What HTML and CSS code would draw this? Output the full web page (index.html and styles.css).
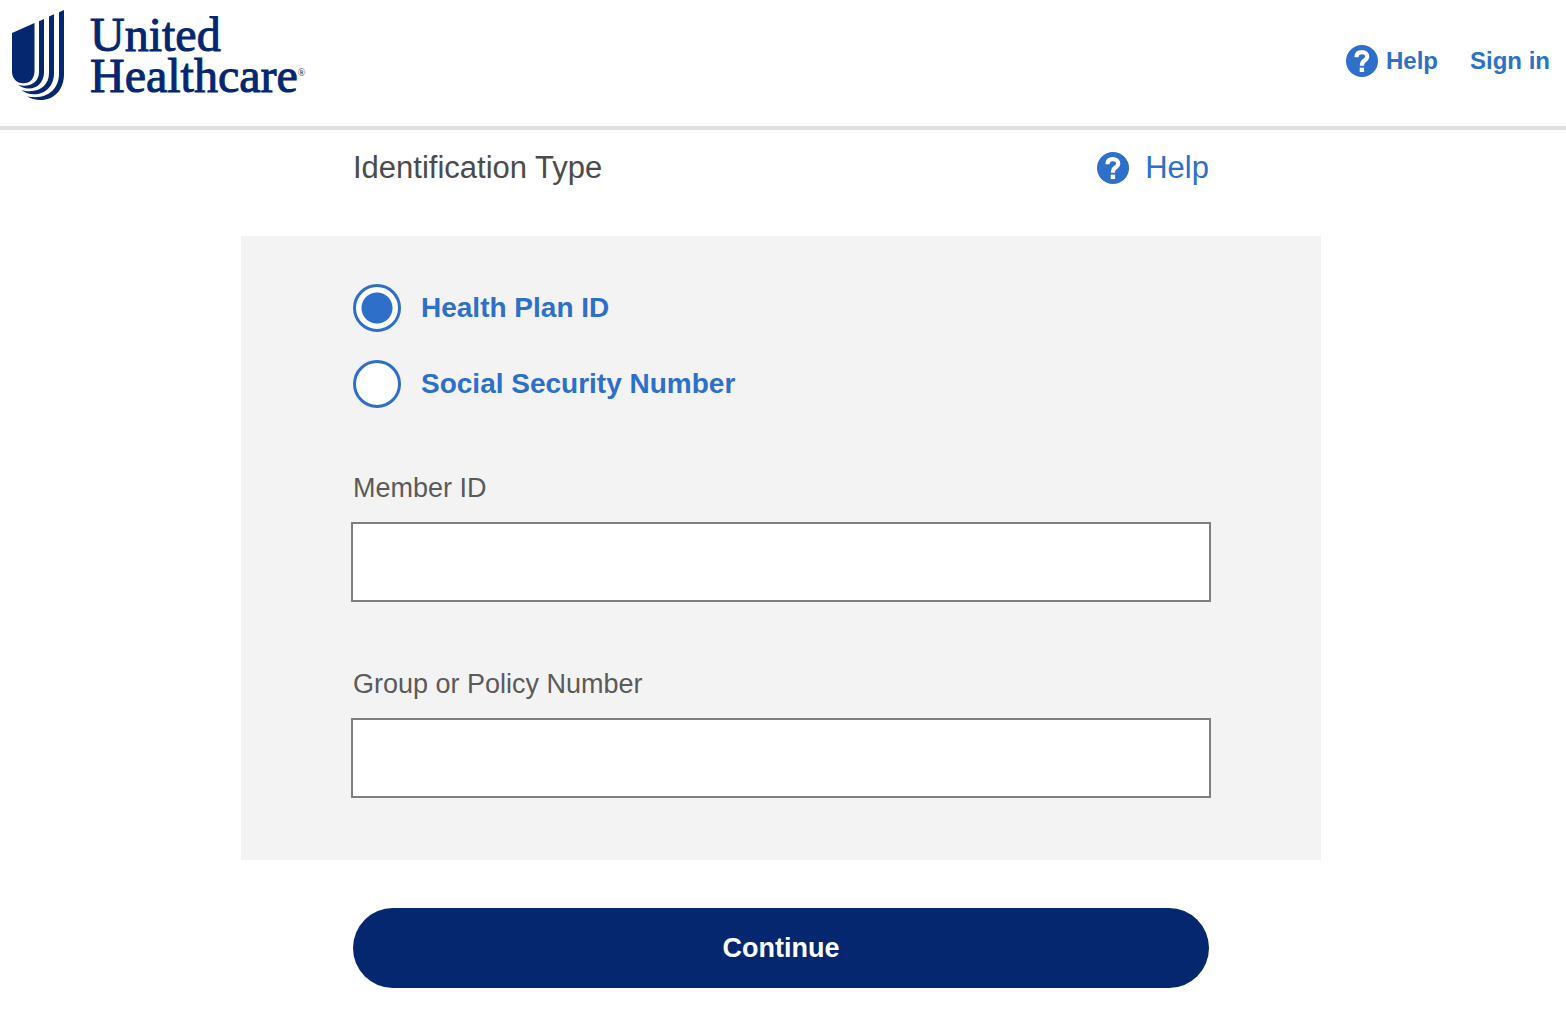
FILE: index.html
```html
<!DOCTYPE html>
<html lang="en">
<head>
<meta charset="utf-8">
<meta name="viewport" content="width=device-width, initial-scale=1">
<title>Identification Type</title>
<link rel="stylesheet" href="styles.css">
</head>
<body>
<svg class="sprite" aria-hidden="true">
  <symbol id="help-icon" viewBox="0 0 32 32">
    <circle cx="16" cy="16" r="16" fill="#2e6fc9"/>
    <path d="M10.400 12.300C10.500 9 12.700 7.200 15.900 7.200c3.100 0 5.300 1.700 5.300 4.300 0 2.100-1.200 3-2.800 4.100-1.700 1.200-2.500 2.300-2.500 5.100" fill="none" stroke="#fff" stroke-width="4.200"/>
    <path d="M13.700 22.600h4.400v4.400h-4.400z" fill="#fff"/>
  </symbol>
</svg>
<header class="header">
  <a class="logo" href="#">
    <svg class="logo-mark" viewBox="0 0 54 92" aria-hidden="true">
      <g fill="#04276f">
        <path d="M0 23 22.500 13V61C22.500 68.500 18 73.300 11.500 73.300 4.500 73.300 0 68.500 0 61.500Z"/>
        <path d="M27 11.200 32 9V62C32 72 25.500 78.500 17 78.500 12.500 78.500 9 77.200 6 74.800 8 75.500 10 75.800 12 75.800 21 75.800 27 70 27 62Z"/>
        <path d="M37 6.500 42 4.300V63C42 76 33.500 84.300 22 84.300 17 84.300 13 82.800 9.200 80 12 80.900 14.500 81.200 17.500 81.200 29.500 81.200 37 74 37 63Z"/>
        <path d="M47 2.300 52 0V64C52 80 42 90 28.500 90 23.500 90 19 88.800 15 86.300 18 87 20.500 87.200 23 87.200 37.500 87.200 47 77.500 47 64Z"/>
      </g>
    </svg>
    <span class="logo-text">United<br>Healthcare<span class="logo-reg">®</span></span>
  </a>
  <nav class="nav">
    <a class="nav-link" href="#"><svg class="icon" aria-hidden="true"><use href="#help-icon"/></svg>Help</a>
    <a class="nav-link" href="#">Sign in</a>
  </nav>
</header>
<main class="main">
  <form class="form">
    <div class="title-row">
      <h1 class="title">Identification Type</h1>
      <a class="help" href="#"><svg class="icon" aria-hidden="true"><use href="#help-icon"/></svg>Help</a>
    </div>
    <div class="card">
      <div class="options">
        <label class="option"><input class="radio" type="radio" name="idtype" checked>Health Plan ID</label>
        <label class="option"><input class="radio" type="radio" name="idtype">Social Security Number</label>
      </div>
      <div class="field">
        <label class="label" for="member">Member ID</label>
        <input class="input" id="member" type="text">
      </div>
      <div class="field">
        <label class="label" for="group">Group or Policy Number</label>
        <input class="input" id="group" type="text">
      </div>
    </div>
    <div class="actions"><button class="continue" type="submit">Continue</button></div>
  </form>
</main>
</body>
</html>
```
FILE: styles.css
```css
* { box-sizing: border-box; }

body {
  margin: 0;
  background: #fff;
  color: #4b4b4b;
  font-family: "Liberation Sans", Arial, sans-serif;
}

a { text-decoration: none; color: #2e6fc9; }

.sprite { display: none; }
.icon { width: 32px; height: 32px; flex: none; }

.header {
  display: flex;
  justify-content: space-between;
  align-items: flex-start;
  padding: 10px 16px 16px 12px;
  border-bottom: 4px solid #dedede;
}

.logo { display: flex; gap: 24px; color: #04276f; }
.logo-mark { width: 54px; height: 92px; }

.logo-text {
  padding-top: 4px;
  padding-bottom: 14px;
  font-family: "Liberation Serif", serif;
  font-size: 48px;
  line-height: 41px;
  -webkit-text-stroke: 1px #04276f;
}

.logo-reg { font-size: 10px; vertical-align: 16px; line-height: 1; -webkit-text-stroke: 0; }

.nav { display: flex; gap: 32px; padding-top: 34px; }

.nav-link {
  display: flex;
  align-items: center;
  gap: 8px;
  font-size: 24px;
  line-height: 34px;
  font-weight: 700;
}

.main { padding: 18px 4px 32px 0; }
.form { max-width: 1080px; margin: 0 auto; }

.title-row {
  display: flex;
  justify-content: space-between;
  align-items: center;
  padding: 0 112px 48px;
}

.title { margin: 0; font-size: 31px; line-height: 40px; font-weight: 400; }

.help {
  display: flex;
  align-items: center;
  gap: 16px;
  font-size: 31px;
  line-height: 40px;
}

.card { padding: 48px 110px 62px; background: #f3f3f3; }

.options { display: grid; gap: 28px; padding: 0 2px; }

.option {
  display: flex;
  align-items: center;
  gap: 20px;
  justify-self: start;
  color: #2e6fc9;
  font-size: 28px;
  font-weight: 700;
}

.radio {
  appearance: none;
  width: 48px;
  height: 48px;
  margin: 0;
  border: 3px solid #2e6fc9;
  border-radius: 50%;
  background: #fff;
}

.radio:checked { background: radial-gradient(circle, #2e6fc9 15px, #fff 16px); }

.field { padding-top: 66px; }
.options + .field { padding-top: 64px; }

.label {
  display: block;
  padding: 0 2px 18px;
  color: #5a5a5a;
  font-size: 27px;
  line-height: 32px;
}

.input {
  display: block;
  width: 100%;
  height: 80px;
  padding: 0 20px;
  border: 2px solid #7f7f7f;
  border-radius: 0;
  background: #fff;
  font: inherit;
  font-size: 27px;
}

.actions { padding: 48px 112px 0; }

.continue {
  display: block;
  width: 100%;
  height: 80px;
  border: 0;
  border-radius: 40px;
  background: #04276f;
  color: #fff;
  font: inherit;
  font-size: 27px;
  font-weight: 700;
}
```
